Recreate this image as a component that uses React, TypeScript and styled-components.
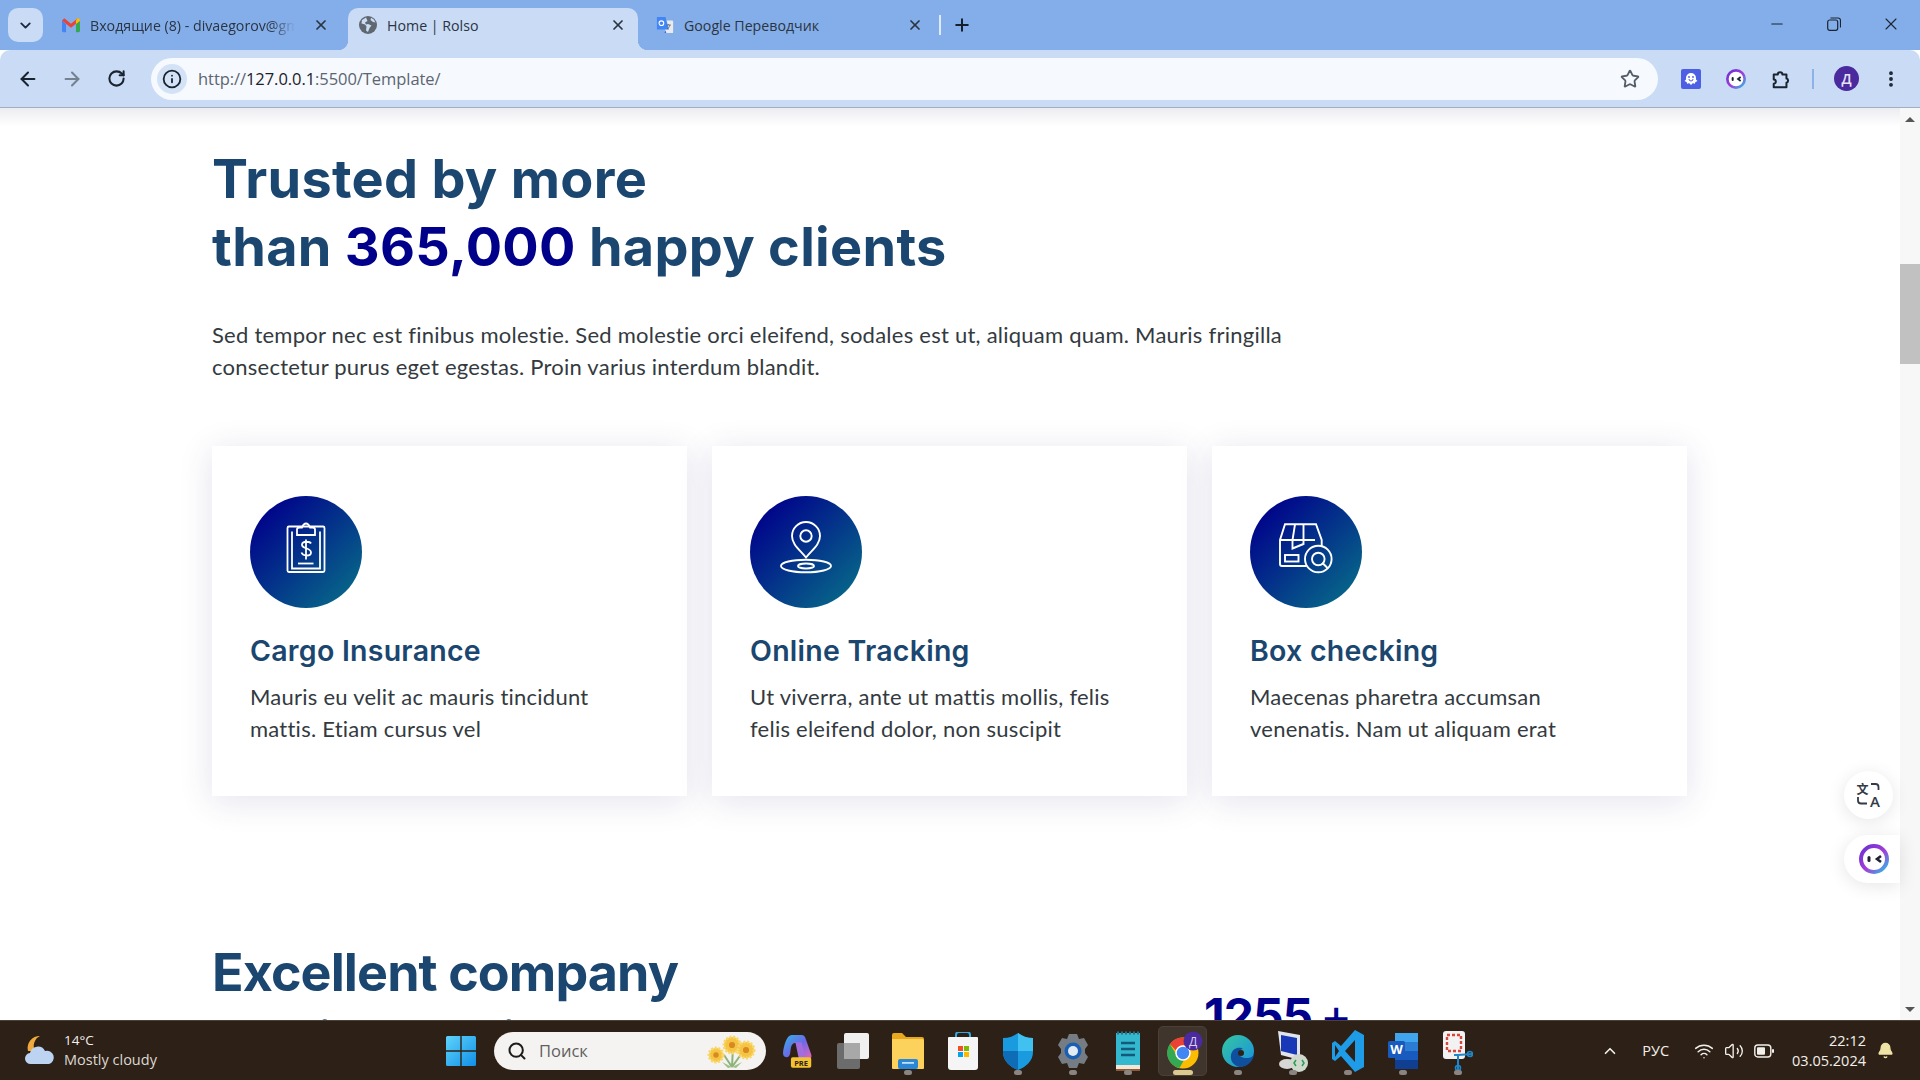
import React from 'react';
import styled, { createGlobalStyle } from 'styled-components';
import {
  ArrowLeft, ArrowRight, RotateCw, Info, Star, X, Plus, ChevronDown, Minus, Search, Wifi, Volume2,
  Bell, ChevronUp, EllipsisVertical,
} from 'lucide-react';

const Global = createGlobalStyle`
  html, body { margin: 0; padding: 0; height: 100%; overflow: hidden; background: #fff; }
  * { box-sizing: border-box; }
  #root { height: 100%; }
`;

const Shell = styled.div`
  display: flex; flex-direction: column; width: 1920px; height: 1080px; overflow: hidden;
  font-family: "Open Sans", "Noto Sans", sans-serif;
`;

/* ---------- browser chrome ---------- */
const TabStrip = styled.div`
  display: flex; align-items: flex-end; height: 50px; flex: none; background: #84aeea; padding-left: 8px;
`;
const TabSearch = styled.button`
  width: 35px; height: 34px; margin: 0 8px 8px 0; border: 0; padding: 0; border-radius: 10px;
  background: #c9dbf5; color: #1c2a3c; display: flex; align-items: center; justify-content: center;
`;
const Tab = styled.div<{ $active?: boolean }>`
  position: relative; width: 290px; height: 42px; margin-right: 7px; padding: 0 12px 8px 11px;
  display: flex; align-items: center; gap: 10px; border-radius: 10px 10px 0 0;
  background: ${p => (p.$active ? '#c9dbf5' : 'transparent')};
  color: #2b3441; font-size: 14.2px;
  ${p => p.$active && `
    &::before, &::after { content: ''; position: absolute; bottom: 0; width: 10px; height: 10px; }
    &::before { left: -10px; background: radial-gradient(circle at 0 0, transparent 10px, #c9dbf5 10.5px); }
    &::after { right: -10px; background: radial-gradient(circle at 100% 0, transparent 10px, #c9dbf5 10.5px); }
  `}
`;
const TabIcon = styled.span`
  width: 18px; height: 20px; flex: none; display: flex; align-items: center; justify-content: center;
`;
const TabTitle = styled.span<{ $fade?: boolean }>`
  flex: 1; overflow: hidden; white-space: nowrap; margin-right: 8px;
  ${p => p.$fade && `-webkit-mask-image: linear-gradient(90deg, #000 88%, transparent); mask-image: linear-gradient(90deg, #000 88%, transparent);`}
`;
const TabSep = styled.span`
  width: 2px; height: 20px; background: #dfe9f8; margin: 0 11px 15px -3px;
`;
const NewTab = styled.span`
  display: flex; margin-bottom: 15px; color: #16202c;
`;
const WindowControls = styled.div`
  margin-left: auto; display: flex; gap: 37px; padding: 0 19px 16px 0; color: #1b2430; align-self: flex-end;
`;
const WinBtn = styled.span`
  width: 20px; height: 20px; display: flex; align-items: center; justify-content: center;
`;
const Toolbar = styled.div`
  position: relative; z-index: 2; height: 58px; flex: none; background: #c9dbf5; border-radius: 10px 10px 0 0;
  border-bottom: 1px solid #a5aebd; display: flex; align-items: center; padding: 0 0 0 17px; margin-top: 0;
`;
const NavBtn = styled.span<{ $dim?: boolean }>`
  width: 22px; height: 22px; margin-right: 22px; display: flex; align-items: center; justify-content: center;
  color: ${p => (p.$dim ? '#76818f' : '#1a2430')};
`;
const Omnibox = styled.div`
  width: 1507px; height: 42px; margin-left: 2px; border-radius: 21px; background: #f6f9fe; display: flex; align-items: center;
  padding: 0 18px 0 6px; margin-right: 23px;
`;
const InfoChip = styled.span`
  width: 30px; height: 30px; border-radius: 50%; background: #d3e2f6; display: flex; align-items: center; justify-content: center;
  color: #1a2430; margin-right: 11px;
`;
const Url = styled.span`
  flex: 1; font-size: 16.5px; color: #5c6570; letter-spacing: -0.06px;
  b { font-weight: 400; color: #1b2128; }
`;
const ToolIcon = styled.span`
  width: 20px; height: 20px; margin-right: 25px; display: flex; align-items: center; justify-content: center; color: #1a2430;
`;
const ToolSep = styled.span`
  width: 2px; height: 20px; background: #8db2e6; margin: 0 20px 0 -4px;
`;
const Avatar = styled.span`
  width: 25px; height: 25px; border-radius: 50%; background: #4a2a9c; color: #e8e2fb; font-size: 14px; font-weight: 600;
  display: flex; align-items: center; justify-content: center; margin-right: 22px;
`;

/* ---------- page ---------- */
const Viewport = styled.div`
  position: relative; flex: 1; min-height: 0; display: flex; overflow: hidden; background: #fff;
  &::before { content: ''; position: absolute; z-index: 1; left: 0; right: 20px; top: 0; height: 18px;
    background: linear-gradient(180deg, #ececf1, rgba(255,255,255,0)); pointer-events: none; }
`;
const Main = styled.main`
  flex: 1; min-width: 0; padding: 37px 0 0 212px;
`;
const Heading = styled.h2<{ $compact?: boolean }>`
  margin: 0; font-family: "Inter", "Liberation Sans", sans-serif; font-weight: 700; line-height: 68px; color: #1a4670;
  font-size: ${p => (p.$compact ? '52px' : '54px')};
  letter-spacing: ${p => (p.$compact ? '-0.9px' : '0.3px')};
`;
const Highlight = styled.span`
  color: #00008b;
`;
const Lead = styled.p`
  margin: 38px 0 63px; width: 1100px; font-family: "Lato", sans-serif; font-size: 22px; letter-spacing: 0.24px; line-height: 32px; color: #333a40;
`;
const Cards = styled.div`
  display: grid; grid-template-columns: repeat(3, 475px); gap: 25px;
`;
const Card = styled.article`
  height: 350px; padding: 50px 38px 0; background: #fff; box-shadow: 0 5px 32px rgba(60, 60, 130, 0.14);
`;
const Badge = styled.div`
  width: 112px; height: 112px; border-radius: 50%; background: linear-gradient(135deg, #00008b 10%, #087488 100%);
  color: #fff; margin-bottom: 25px;
  svg { display: block; }
`;
const CardTitle = styled.h3`
  margin: 0 0 12px; font-family: "Inter", sans-serif; font-weight: 600; font-size: 28.5px; line-height: 36px; color: #1a4670; letter-spacing: 0.25px;
`;
const CardText = styled.p`
  margin: 0; font-family: "Lato", sans-serif; font-size: 22px; letter-spacing: 0.24px; line-height: 32px; color: #333a40;
`;
const Split = styled.section`
  margin-top: 143px; display: grid; grid-template-columns: 992px 1fr;
`;
const Stat = styled.div`
  padding-top: 43px; font-family: "Inter", sans-serif; font-weight: 700; font-size: 48px; line-height: 68px; color: #00008b; letter-spacing: -1px;
  span { font-weight: 400; margin-left: 8px; }
`;
const Track = styled.div`
  width: 20px; flex: none; background: #f7f7f7; display: flex; flex-direction: column; align-items: center;
`;
const Arrow = styled.span<{ $down?: boolean }>`
  margin-top: ${p => (p.$down ? 'auto' : '9px')}; margin-bottom: ${p => (p.$down ? '8px' : '0')}; width: 0; height: 0;
  border-left: 5px solid transparent; border-right: 5px solid transparent;
  ${p => (p.$down ? 'border-top: 5px solid #555;' : 'border-bottom: 5px solid #555;')}
`;
const Thumb = styled.div`
  width: 20px; height: 100px; margin-top: 142px; background: #c1c1c1;
`;
const FloatRound = styled.div`
  position: absolute; right: 27px; top: 663px; width: 49px; height: 48px; border-radius: 50%; background: #fff;
  box-shadow: 0 3px 18px rgba(0,0,0,.1); display: flex; align-items: center; justify-content: center; color: #333b46;
`;
const FloatPill = styled.div`
  position: absolute; right: 20px; top: 727px; width: 56px; height: 48px; border-radius: 24px 0 0 24px; background: #fff;
  box-shadow: 0 3px 18px rgba(0,0,0,.1); display: flex; align-items: center; padding-left: 15px;
`;

/* ---------- taskbar ---------- */
const Taskbar = styled.footer`
  height: 60px; flex: none; background: #2d2117; border-top: 1px solid #4a4038; display: flex; align-items: center; color: #f3f0ec;
`;
const Weather = styled.div`
  width: 446px; flex: none; display: flex; align-items: center; padding-left: 24px; gap: 8px;
`;
const WeatherText = styled.div`
  font-size: 14.5px; line-height: 20px; margin-top: -2px; div:first-child { font-size: 13.5px; } div:last-child { color: #dcd8d3; }
`;
const StartBtn = styled.span`
  width: 30px; height: 30px; flex: none; margin-right: 18px; display: block;
`;
const SearchPill = styled.div`
  width: 272px; height: 38px; flex: none; border-radius: 19px; background: #f4f3f1; display: flex; align-items: center; padding-left: 13px; gap: 12px;
  color: #5f5f5f; font-size: 16.5px; margin-right: 4px; position: relative;
`;
const SearchFlowers = styled.span`
  position: absolute; right: 4px; top: 3px; display: flex;
`;
const AppSlot = styled.div`
  position: relative; width: 55px; height: 50px; flex: none; display: flex; align-items: center; justify-content: center;
`;
const AppHighlight = styled.span`
  position: absolute; inset: 0 3px; background: #3f352c; border-radius: 5px; border: 1px solid #4a4038;
`;
const AppGlyph = styled.span`
  position: relative; display: flex;
`;
const AppDot = styled.span<{ $active?: boolean }>`
  position: absolute; bottom: 1px; left: 50%; transform: translateX(-50%); height: 5px; border-radius: 3px;
  width: ${p => (p.$active ? '20px' : '8px')}; background: ${p => (p.$active ? '#dcc98f' : '#8a8580')};
`;
const Tray = styled.div`
  margin-left: auto; display: flex; align-items: center; padding-right: 26px;
`;
const TrayItem = styled.span<{ $after: number }>`
  display: flex; margin-right: ${p => p.$after}px; font-size: 14.5px;
`;
const Clock = styled.div`
  text-align: right; font-size: 14.5px; line-height: 20px; margin-right: 11px;
`;

/* ---------- drawings ---------- */
const ClipboardIcon = () => (
  <svg width="112" height="112" viewBox="0 0 112 112" fill="none" stroke="currentColor" strokeWidth="1.8">
    <rect x="37.5" y="30.5" width="37" height="45.5" rx="1.5" />
    <path d="M42 35.5v37h28v-37" />
    <path d="M47 39v-5.5q0-2 2.5-2h2.5q1.5-4 4-4t4 4h2.5q2.5 0 2.5 2V39z" />
    <path d="M61 47.5c-1-2-8.500-3-9 1 -.5 4.500 9 3 9 8 0 4-8 4-9.500 0M56 43.500v20" />
    <path d="M48 67.500h15.500" />
  </svg>
);
const PinIcon = () => (
  <svg width="112" height="112" viewBox="0 0 112 112" fill="none" stroke="currentColor" strokeWidth="1.9">
    <path d="M56 61.500C50 54 42 48.500 42 40a14 14 0 0 1 28 0c0 8.500-8 14-14 21.500z" />
    <circle cx="56" cy="40" r="5.700" />
    <ellipse cx="56" cy="70" rx="25" ry="6.300" />
    <ellipse cx="56" cy="70" rx="8" ry="2.500" />
  </svg>
);
const BoxIcon = () => (
  <svg width="112" height="112" viewBox="0 0 112 112" fill="none" stroke="currentColor" strokeWidth="1.9">
    <path d="M56.500 70H32a2 2 0 0 1-2-2V44l5-15.700h31L71.700 44v6" />
    <path d="M30 44h35M45 28.300 42.500 44v8.500l11-4.500V28.300" />
    <rect x="35" y="59" width="13.500" height="6.500" />
    <circle cx="68.300" cy="63" r="13.300" />
    <circle cx="68.300" cy="63" r="6.300" />
    <path d="m73 67.500 4 4" strokeLinecap="round" />
  </svg>
);
const GmailIcon = () => (
  <svg width="20" height="16" viewBox="0 0 20 16">
    <path d="M0 3v11.500A1.500 1.500 0 0 0 1.500 16H4.500V7z" fill="#4285f4" />
    <path d="M20 3v11.500a1.500 1.500 0 0 1-1.500 1.500h-3V7z" fill="#34a853" />
    <path d="M0 3 2.500.5 10 6.500 17.500.5 20 3 10 11z" fill="#ea4335" />
    <path d="M15.500 3.500V7L20 3.500C20 1 18 0 16.500.800z" fill="#fbbc04" />
  </svg>
);
const GlobeFavicon = () => (
  <svg width="18" height="18" viewBox="0 0 18 18">
    <circle cx="9" cy="9" r="9" fill="#5f6770" />
    <path d="M7 1.500 3 4l-.5 3.500 3.500 1 1.500 2-.5 4 2 1.500 1.500-4 2-2.500-3.500-1.500-2 .5L6 6.500 8.500 5z" fill="#c9dbf5" />
    <path d="M12 1.800 11.500 4l2.500 2 2.500.5A8 8 0 0 0 12 1.800z" fill="#c9dbf5" />
  </svg>
);
const TranslateFavicon = () => (
  <svg width="20" height="20" viewBox="0 0 20 20">
    <path d="M8 5h10a1 1 0 0 1 1 1v12a1 1 0 0 1-1 1h-7z" fill="#e8eaed" />
    <path d="M1 1h9.500l4 14H1z" fill="#4285f4" />
    <path d="M10.500 16 9.500 19l2-0z" fill="#3367d6" />
    <circle cx="6" cy="8" r="2.600" fill="none" stroke="#fff" strokeWidth="1.200" />
    <path d="M11.500 10h5M14 9v1M15.500 10c-.500 2-2 4-3.500 4.500" fill="none" stroke="#5f6368" strokeWidth=".9" />
  </svg>
);
const TranslateWidget = () => (
  <svg width="26" height="26" viewBox="0 0 26 26" fill="none" stroke="#333b46" strokeWidth="1.800">
    <text x="0.500" y="11.500" fontSize="12" fontWeight="700" fill="#333b46" stroke="none" fontFamily="Noto Sans CJK SC, sans-serif">文</text>
    <text x="14" y="24.500" fontSize="15" fontWeight="600" fill="#333b46" stroke="none" fontFamily="Open Sans, sans-serif">A</text>
    <path d="M15 2h4.500a3 3 0 0 1 3 3v3" />
    <path d="M2 15v3.500a3 3 0 0 0 3 3h6" />
  </svg>
);
const GhostExt = () => (
  <svg width="20" height="20" viewBox="0 0 20 20">
    <rect width="20" height="20" rx="2" fill="#4d5fe3" />
    <path d="M10 4a5 5 0 0 1 5 5v1.500l1.500 1.500-2 1-1 2-1.500-1-2 2-2-2-1.500 1-1-2-2-1L5 10.500V9a5 5 0 0 1 5-5z" fill="#fff" />
    <path d="M8 10a2 2 0 0 0 4 0" fill="none" stroke="#4d5fe3" strokeWidth="1" />
    <circle cx="8" cy="8" r=".9" fill="#4d5fe3" /><circle cx="12" cy="8" r=".9" fill="#4d5fe3" />
  </svg>
);
const MaskBot = ({ size, id }: { size: number; id: string }) => (
  <svg width={size} height={size} viewBox="0 0 30 30">
    <defs>
      <linearGradient id={id} x1="0" y1="0" x2="1" y2="1">
        <stop offset="0" stopColor="#6a2fd4" /><stop offset=".55" stopColor="#a23fd8" /><stop offset="1" stopColor="#27c3e6" />
      </linearGradient>
    </defs>
    <circle cx="15" cy="15" r="13" fill="#fff" stroke={`url(#${id})`} strokeWidth="4" />
    <rect x="8.500" y="12" width="3" height="6" rx="1.500" fill="#1d2330" />
    <path d="M22 12 18 15l4 3" fill="none" stroke="#1d2330" strokeWidth="2.600" />
  </svg>
);
const PuzzleExt = () => (
  <svg width="22" height="22" viewBox="0 0 22 22" fill="none" stroke="#1a2430" strokeWidth="2.200" strokeLinejoin="round">
    <path d="M3 6h4.500a2.500 2.500 0 0 1 5 0H17v4.500a2.300 2.300 0 0 1 0 4.500V20H3v-3.800a2.300 2.300 0 0 0 0-4.600z" />
  </svg>
);
const MoonCloud = () => (
  <svg width="32" height="32" viewBox="0 0 32 32">
    <path d="M16 1a11 11 0 0 0-5 15l-7 0A12 12 0 0 1 16 1z" fill="#f0a93c" />
    <path d="M7 29a5.500 5.500 0 0 1-1-11 8 8 0 0 1 15-2 6.500 6.500 0 0 1 4 13z" fill="#bcd3f2" />
  </svg>
);
const WinLogo = () => (
  <svg width="30" height="30" viewBox="0 0 30 30">
    <defs><linearGradient id="win" x1="0" y1="0" x2="1" y2="1"><stop offset="0" stopColor="#5fd3fb" /><stop offset="1" stopColor="#1190e6" /></linearGradient></defs>
    <path d="M0 1.500A1.500 1.500 0 0 1 1.500 0H14.300v14.300H0zM15.700 0h12.800A1.500 1.500 0 0 1 30 1.500v12.800H15.700zM0 15.700h14.300V30H1.500A1.500 1.500 0 0 1 0 28.500zM15.700 15.700H30v12.800a1.500 1.500 0 0 1-1.500 1.500H15.700z" fill="url(#win)" />
  </svg>
);
const Flowers = () => (
  <svg width="60" height="34" viewBox="0 0 60 34">
    <path d="M30 32 22 20M30 32l1-20M30 32l10-14" stroke="#8db27a" strokeWidth="2" fill="none" />
    <path d="M30 32 20 27l6 6zM30 32l10-5-6 6z" fill="#9cc088" />
    {[[14, 20, 7], [30, 10, 8], [44, 15, 8]].map(([x, y, r]) => (
      <g key={x}>
        <circle cx={x} cy={y} r={r} fill="#f6c445" strokeDasharray="2 1.500" stroke="#f9d765" strokeWidth="3" />
        <circle cx={x} cy={y} r={r / 2.600} fill="#d98a1e" />
      </g>
    ))}
  </svg>
);
const Copilot = () => (
  <svg width="30" height="38" viewBox="0 0 34 40">
    <defs><linearGradient id="cop" x1="0" y1="0" x2="1" y2="1"><stop offset="0" stopColor="#2fb4e8" /><stop offset=".5" stopColor="#6b6ae8" /><stop offset="1" stopColor="#e765b8" /></linearGradient></defs>
    <path d="M10 2h11c3 0 4 2 5 5l6 17c1 4-1 5-4 5h-6l-4-14c-1-3-2-4-4-4-3 0-4 2-5 5l-1 7c-1 3-2 4-4 4-3 0-4-2-4-5C1 14 4 2 10 2z" fill="url(#cop)" />
    <path d="M14 10h7l5 19H18z" fill="#a36de0" />
    <rect x="9" y="27" width="23" height="12" rx="2" fill="#f4c230" />
    <text x="20.500" y="36.500" fontSize="8.500" fontWeight="700" textAnchor="middle" fill="#2d2117" fontFamily="Open Sans">PRE</text>
  </svg>
);
const TaskView = () => (
  <svg width="32" height="38" viewBox="0 0 32 38">
    <rect x="0" y="11" width="23" height="26" rx="2" fill="#6c6c6c" />
    <rect x="7" y="1" width="25" height="26" rx="2" fill="#f0f0f0" />
    <rect x="7" y="11" width="16" height="16" fill="#a8a8a8" />
  </svg>
);
const Folder = () => (
  <svg width="32" height="38" viewBox="0 0 32 38">
    <path d="M0 3a2 2 0 0 1 2-2h8l4 4h16a2 2 0 0 1 2 2v4H0z" fill="#e9a91f" />
    <path d="M0 7h30a2 2 0 0 1 2 2v27a1 1 0 0 1-1 1H1a1 1 0 0 1-1-1z" fill="#fcd25c" />
    <rect x="6" y="27" width="20" height="10" rx="2" fill="#2c86d6" /><rect x="10" y="30" width="12" height="1.800" fill="#bde0fb" />
  </svg>
);
const Store = () => (
  <svg width="30" height="38" viewBox="0 0 30 38">
    <path d="M8 7V3a3 3 0 0 1 3-3h8a3 3 0 0 1 3 3v4" fill="none" stroke="#34a9dc" strokeWidth="2" />
    <path d="M1 5h28a1 1 0 0 1 1 1v29a3 3 0 0 1-3 3H3a3 3 0 0 1-3-3V6a1 1 0 0 1 1-1z" fill="#f5f5f5" />
    <rect x="10" y="14" width="5" height="5" fill="#f25022" /><rect x="16" y="14" width="5" height="5" fill="#7fba00" />
    <rect x="10" y="20" width="5" height="5" fill="#00a4ef" /><rect x="16" y="20" width="5" height="5" fill="#ffb900" />
  </svg>
);
const Shield = () => (
  <svg width="30" height="38" viewBox="0 0 30 38">
    <path d="M15 1c4 3 9 5 15 5v14c0 9-7 15-15 18C7 35 0 29 0 20V6c6 0 11-2 15-5z" fill="#1a9be0" />
    <path d="M15 19V1c4 3 9 5 15 5v13z" fill="#40c1f0" />
    <path d="M15 19H0v1c0 9 7 15 15 18z" fill="#0f6cb6" />
  </svg>
);
const Gear = () => (
  <svg width="32" height="34" viewBox="0 0 32 34">
    <path d="M12 0h8l2 5 5-1 4 7-3 4v4l3 4-4 7-5-1-2 5h-8l-2-5-5 1-4-7 3-4v-4L1 11l4-7 5 1z" fill="#757c83" />
    <circle cx="16" cy="17" r="8.500" fill="#1a5fb4" /><circle cx="16" cy="17" r="5" fill="#e2eaf2" />
  </svg>
);
const Notepad = () => (
  <svg width="24" height="40" viewBox="0 0 24 40">
    <rect x="0" y="2" width="24" height="32" fill="#34b8cf" />
    <path d="M0 34h24v5H0z" fill="#f3e7d3" /><path d="M0 38h24v2H0z" fill="#8a5a3a" />
    <path d="M1 2h22" stroke="#2a6f85" strokeWidth="3" strokeDasharray="2 2" />
    <path d="M5 12h14M5 18h14M5 24h14" stroke="#135a7a" strokeWidth="2.400" />
  </svg>
);
const Chrome = () => (
  <svg width="42" height="44" viewBox="-5 0 42 44">
    <circle cx="16" cy="24" r="15.500" fill="#fbbc04" />
    <path d="M16 8.500a15.500 15.500 0 0 1 13.500 8H16a7.500 7.500 0 0 0-7 5L2.800 15A15.500 15.500 0 0 1 16 8.500z" fill="#ea4335" />
    <path d="M2.800 15 9 25a7.500 7.500 0 0 0 8 6l-4.500 8A15.500 15.500 0 0 1 2.800 15z" fill="#34a853" />
    <circle cx="16" cy="24" r="7" fill="#4285f4" stroke="#fff" strokeWidth="1.500" />
    <circle cx="26" cy="12" r="9.500" fill="#4a2a9c" />
    <text x="26" y="16.500" fontSize="12" textAnchor="middle" fill="#d8d0f4" fontFamily="Open Sans">Д</text>
  </svg>
);
const Edge = () => (
  <svg width="32" height="32" viewBox="0 0 32 32">
    <defs><linearGradient id="edge" x1="0" y1="0" x2="1" y2="1"><stop offset="0" stopColor="#34c7a0" /><stop offset="1" stopColor="#1a8fe0" /></linearGradient></defs>
    <circle cx="16" cy="16" r="16" fill="url(#edge)" />
    <path d="M32 18c0 4-4 5-7 5-5 0-8-2-8-5 0-2 2-4 4-4-3-3-11-1-12 6-1 6 3 11 9 12 7 0 14-6 14-14z" fill="#0e4f9e" />
    <circle cx="19" cy="18" r="3" fill="#2d2117" />
  </svg>
);
const RemoteDesk = () => (
  <svg width="30" height="42" viewBox="0 0 30 42">
    <path d="M0 1 22 5v25L3 25z" fill="#e1e4ea" /><path d="M3 5 19 8v17L3 21z" fill="#1838b8" />
    <ellipse cx="9" cy="34" rx="8" ry="5" fill="#d6d6d6" />
    <circle cx="21" cy="33" r="9" fill="#cfd8cd" />
    <path d="M18 30l-2 3 2 3M24 30l2 3-2 3" stroke="#2a9d50" strokeWidth="1.500" fill="none" />
  </svg>
);
const VSCode = () => (
  <svg width="32" height="42" viewBox="0 0 32 42">
    <path d="M23 0 32 5v32l-9 5-14-16-6 5-3-2V13l3-2 6 5z" fill="#1f9ce8" />
    <path d="M23 10 13 21l10 11z" fill="#2d2117" />
    <path d="M3 15l4 6-4 6z" fill="#2d2117" />
  </svg>
);
const Word = () => (
  <svg width="30" height="36" viewBox="0 0 30 36">
    <rect x="7" y="0" width="23" height="36" rx="2" fill="#2b7cd3" />
    <rect x="7" y="0" width="23" height="9" fill="#41a5ee" /><rect x="7" y="18" width="23" height="9" fill="#185abd" /><rect x="7" y="27" width="23" height="9" fill="#103f91" />
    <rect x="0" y="8" width="17" height="17" rx="1.500" fill="#185abd" />
    <text x="8.500" y="21" fontSize="13" fontWeight="700" textAnchor="middle" fill="#fff" fontFamily="Open Sans">W</text>
  </svg>
);
const Snipping = () => (
  <svg width="30" height="40" viewBox="0 0 30 40">
    <rect x="0" y="0" width="22" height="28" rx="3" fill="#f2f2f2" />
    <rect x="4" y="4" width="14" height="16" fill="none" stroke="#d9453b" strokeWidth="2.400" strokeDasharray="3 2" />
    <path d="M15 40V24l-4 0M15 24l14-1" stroke="#1f86c9" strokeWidth="2" fill="none" />
    <circle cx="27" cy="23" r="2.500" fill="none" stroke="#1f86c9" strokeWidth="1.600" />
    <circle cx="15" cy="37" r="2.500" fill="none" stroke="#1f86c9" strokeWidth="1.600" />
  </svg>
);
const BatteryGlyph = () => (
  <svg width="20" height="14" viewBox="0 0 20 14">
    <rect x=".8" y="1" width="16" height="12" rx="3" fill="none" stroke="#f3f0ec" strokeWidth="1.400" />
    <rect x="3" y="3.200" width="8" height="7.600" rx="1" fill="#f3f0ec" />
    <rect x="18" y="5" width="2" height="4" rx="1" fill="#f3f0ec" />
  </svg>
);

const cards = [
  { icon: <ClipboardIcon />, title: 'Cargo Insurance', text: ['Mauris eu velit ac mauris tincidunt', 'mattis. Etiam cursus vel'] },
  { icon: <PinIcon />, title: 'Online Tracking', text: ['Ut viverra, ante ut mattis mollis, felis', 'felis eleifend dolor, non suscipit'] },
  { icon: <BoxIcon />, title: 'Box checking', text: ['Maecenas pharetra accumsan', 'venenatis. Nam ut aliquam erat'] },
];

const apps: { icon: React.ReactNode; dot?: boolean; active?: boolean }[] = [
  { icon: <Copilot /> },
  { icon: <TaskView /> },
  { icon: <Folder />, dot: true },
  { icon: <Store /> },
  { icon: <Shield />, dot: true },
  { icon: <Gear />, dot: true },
  { icon: <Notepad />, dot: true },
  { icon: <Chrome />, dot: true, active: true },
  { icon: <Edge />, dot: true },
  { icon: <RemoteDesk />, dot: true },
  { icon: <VSCode />, dot: true },
  { icon: <Word />, dot: true },
  { icon: <Snipping />, dot: true },
];

export default function App() {
  return (
    <Shell>
      <Global />
      <TabStrip>
        <TabSearch><ChevronDown size={17} strokeWidth={2.6} /></TabSearch>
        <Tab>
          <TabIcon><GmailIcon /></TabIcon>
          <TabTitle $fade>Входящие (8) - divaegorov@gmail.com</TabTitle>
          <X size={16} strokeWidth={2.6} />
        </Tab>
        <Tab $active>
          <TabIcon><GlobeFavicon /></TabIcon>
          <TabTitle>Home | Rolso</TabTitle>
          <X size={16} strokeWidth={2.6} />
        </Tab>
        <Tab>
          <TabIcon><TranslateFavicon /></TabIcon>
          <TabTitle>Google Переводчик</TabTitle>
          <X size={16} strokeWidth={2.6} />
        </Tab>
        <TabSep />
        <NewTab><Plus size={20} strokeWidth={2.4} /></NewTab>
        <WindowControls>
          <WinBtn><Minus size={18} strokeWidth={1.4} /></WinBtn>
          <WinBtn>
            <svg width="14" height="14" viewBox="0 0 14 14" fill="none" stroke="currentColor" strokeWidth="1.200">
              <rect x=".7" y="3" width="10" height="10.300" rx="2" />
              <path d="M3.500 1h7.500a2.500 2.500 0 0 1 2.500 2.500V10.500" />
            </svg>
          </WinBtn>
          <WinBtn><X size={20} strokeWidth={1.3} /></WinBtn>
        </WindowControls>
      </TabStrip>
      <Toolbar>
        <NavBtn><ArrowLeft size={22} strokeWidth={2.2} /></NavBtn>
        <NavBtn $dim><ArrowRight size={22} strokeWidth={2.2} /></NavBtn>
        <NavBtn><RotateCw size={19} strokeWidth={2.6} /></NavBtn>
        <Omnibox>
          <InfoChip><Info size={20} strokeWidth={2.2} /></InfoChip>
          <Url>http://<b>127.0.0.1</b>:5500/Template/</Url>
          <Star size={20} strokeWidth={2.2} color="#555d66" />
        </Omnibox>
        <ToolIcon><GhostExt /></ToolIcon>
        <ToolIcon><MaskBot size={20} id="bot-a" /></ToolIcon>
        <ToolIcon><PuzzleExt /></ToolIcon>
        <ToolSep />
        <Avatar>Д</Avatar>
        <EllipsisVertical size={20} strokeWidth={2.6} color="#1a2430" />
      </Toolbar>
      <Viewport>
        <Main>
          <Heading>Trusted by more<br />than <Highlight>365,000</Highlight> happy clients</Heading>
          <Lead>
            Sed tempor nec est finibus molestie. Sed molestie orci eleifend, sodales est ut, aliquam quam. Mauris fringilla consectetur purus eget egestas. Proin varius interdum blandit.
          </Lead>
          <Cards>
            {cards.map(c => (
              <Card key={c.title}>
                <Badge>{c.icon}</Badge>
                <CardTitle>{c.title}</CardTitle>
                <CardText>{c.text[0]}<br />{c.text[1]}</CardText>
              </Card>
            ))}
          </Cards>
          <Split>
            <Heading $compact>Excellent company<br />quality services</Heading>
            <Stat>1255<span>+</span></Stat>
          </Split>
        </Main>
        <Track>
          <Arrow />
          <Thumb />
          <Arrow $down />
        </Track>
        <FloatRound><TranslateWidget /></FloatRound>
        <FloatPill><MaskBot size={30} id="bot-b" /></FloatPill>
      </Viewport>
      <Taskbar>
        <Weather>
          <MoonCloud />
          <WeatherText><div>14°C</div><div>Mostly cloudy</div></WeatherText>
        </Weather>
        <StartBtn><WinLogo /></StartBtn>
        <SearchPill>
          <Search size={20} color="#1c1c1c" strokeWidth={2.4} />
          Поиск
          <SearchFlowers><Flowers /></SearchFlowers>
        </SearchPill>
        {apps.map((a, i) => (
          <AppSlot key={i}>
            {a.active && <AppHighlight />}
            <AppGlyph>{a.icon}</AppGlyph>
            {a.dot && <AppDot $active={a.active} />}
          </AppSlot>
        ))}
        <Tray>
          <TrayItem $after={23}><ChevronUp size={18} strokeWidth={2.2} /></TrayItem>
          <TrayItem $after={25}>РУС</TrayItem>
          <TrayItem $after={10}><Wifi size={20} strokeWidth={1.8} /></TrayItem>
          <TrayItem $after={10}><Volume2 size={20} strokeWidth={1.6} /></TrayItem>
          <TrayItem $after={18}><BatteryGlyph /></TrayItem>
          <Clock><div>22:12</div><div>03.05.2024</div></Clock>
          <Bell size={17} fill="#efe3a6" color="#efe3a6" />
        </Tray>
      </Taskbar>
    </Shell>
  );
}
